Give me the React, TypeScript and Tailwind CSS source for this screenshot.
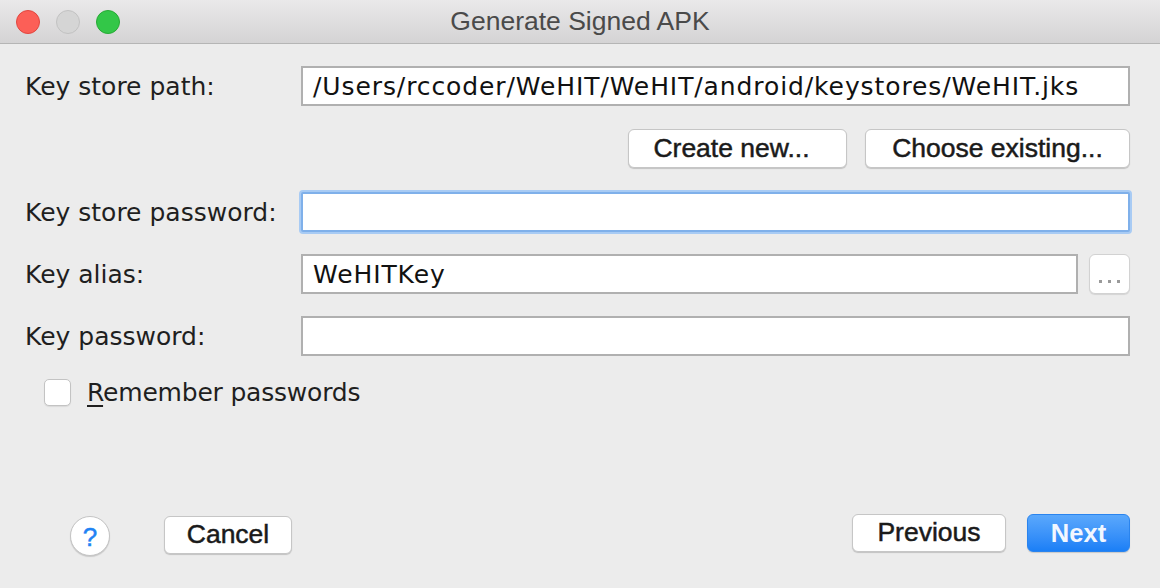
import React from "react";

const LBL = "font-['DejaVu_Sans',sans-serif] text-[25px] text-[#1f1f1f]";
const BTN = "font-['Liberation_Sans',Arial,sans-serif] text-[26.5px] text-[#1a1a1a] [-webkit-text-stroke:0.5px_#1a1a1a] bg-white border border-[#c6c6c6] rounded-[6px] shadow-[0_1px_1px_rgba(0,0,0,0.18)] flex items-center justify-center";

function TextInput({ value, focused, className = "" }: { value?: string; focused?: boolean; className?: string }) {
  return (
    <div
      className={
        "h-[40px] bg-white flex items-center pl-[10px] " +
        (focused
          ? "border-2 border-[#7fb0ea] shadow-[0_0_0_2px_#a8cbf4] rounded-[2px] "
          : "border-2 border-[#b0b0b0] ") +
        className
      }
    >
      <span className={LBL + " text-[#111] leading-none tracking-[0.9px]"}>{value}</span>
    </div>
  );
}

export default function App() {
  return (
    <div className="w-[1160px] h-[588px] bg-[#ececec] flex flex-col overflow-hidden">
      {/* Title bar */}
      <div className="h-[44px] shrink-0 bg-gradient-to-b from-[#eae9ea] to-[#d4d3d4] border-b border-[#b5b5b5] flex items-center relative">
        <div className="flex items-center gap-[16px] pl-[16px]">
          <div className="w-[24px] h-[24px] rounded-full bg-[#fc5f57] border border-[#e2463f]" />
          <div className="w-[24px] h-[24px] rounded-full bg-[#d5d5d5] border border-[#c2c2c2]" />
          <div className="w-[24px] h-[24px] rounded-full bg-[#33c748] border border-[#27aa35]" />
        </div>
        <div className="absolute inset-0 flex items-center justify-center pointer-events-none">
          <span className="font-['Liberation_Sans',Arial,sans-serif] text-[26.5px] text-[#4a4a4a]">Generate Signed APK</span>
        </div>
      </div>

      {/* Body */}
      <div className="flex-1 flex flex-col pl-[25px] pr-[30px]">
        {/* Key store path */}
        <div className="flex items-center mt-[22px]">
          <div className={LBL + " w-[276px] pt-[2px]"}>Key store path:</div>
          <TextInput className="flex-1" value="/Users/rccoder/WeHIT/WeHIT/android/keystores/WeHIT.jks" />
        </div>

        {/* Buttons row */}
        <div className="flex justify-end gap-[18px] mt-[23px]">
          <button className={BTN + " w-[219px] h-[39px] pr-[12px]"}>Create new...</button>
          <button className={BTN + " w-[265px] h-[39px]"}>Choose existing...</button>
        </div>

        {/* Key store password */}
        <div className="flex items-center mt-[24px]">
          <div className={LBL + " w-[276px] pt-[2px]"}>Key store password:</div>
          <TextInput className="flex-1" focused />
        </div>

        {/* Key alias */}
        <div className="flex items-center mt-[22px]">
          <div className={LBL + " w-[276px] pt-[2px]"}>Key alias:</div>
          <TextInput className="flex-1" value="WeHITKey" />
          <button className="ml-[11px] w-[41px] h-[40px] bg-white border border-[#d2d2d2] rounded-[6px] shadow-[0_1px_1px_rgba(0,0,0,0.1)] flex items-end justify-center pb-[10px] gap-[6px]">
            <span className="w-[3px] h-[3px] bg-[#9a9a9a]" />
            <span className="w-[3px] h-[3px] bg-[#9a9a9a]" />
            <span className="w-[3px] h-[3px] bg-[#9a9a9a]" />
          </button>
        </div>

        {/* Key password */}
        <div className="flex items-center mt-[22px]">
          <div className={LBL + " w-[276px] pt-[2px]"}>Key password:</div>
          <TextInput className="flex-1" />
        </div>

        {/* Remember */}
        <div className="flex items-center mt-[18px] pl-[19px]">
          <div className="w-[27px] h-[27px] bg-white border border-[#c3c3c3] rounded-[5px] shadow-[0_1px_1px_rgba(0,0,0,0.08)]" />
          <span className={LBL + " ml-[16px] tracking-[-0.2px]"}>
            <span className="underline underline-offset-[4px] decoration-[2px]">R</span>emember passwords
          </span>
        </div>

        <div className="flex-1" />

        {/* Bottom */}
        <div className="flex items-start mb-[32px]">
          <div className="ml-[45px] mt-[2px] w-[40px] h-[40px] rounded-full bg-white border border-[#c4c4c4] shadow-[0_1px_1px_rgba(0,0,0,0.15)] flex items-center justify-center">
            <span className="font-['Liberation_Sans',Arial,sans-serif] text-[26px] text-[#1f83f4] leading-none pt-[2px] [-webkit-text-stroke:0.5px_#1f83f4]">?</span>
          </div>
          <button className={BTN + " ml-[54px] mt-[2px] w-[128px] h-[38px]"}>Cancel</button>
          <div className="flex-1" />
          <button className={BTN + " w-[154px] h-[38px]"}>Previous</button>
          <button className="ml-[21px] w-[103px] h-[38px] rounded-[6px] bg-gradient-to-b from-[#5aa8fc] to-[#1a7ff6] border border-[#2a84ee] flex items-center justify-center font-['Liberation_Sans',Arial,sans-serif] text-[25.5px] text-[#f2f7ff] font-bold shadow-[0_1px_1px_rgba(0,0,0,0.15)]">
            Next
          </button>
        </div>
      </div>
    </div>
  );
}
